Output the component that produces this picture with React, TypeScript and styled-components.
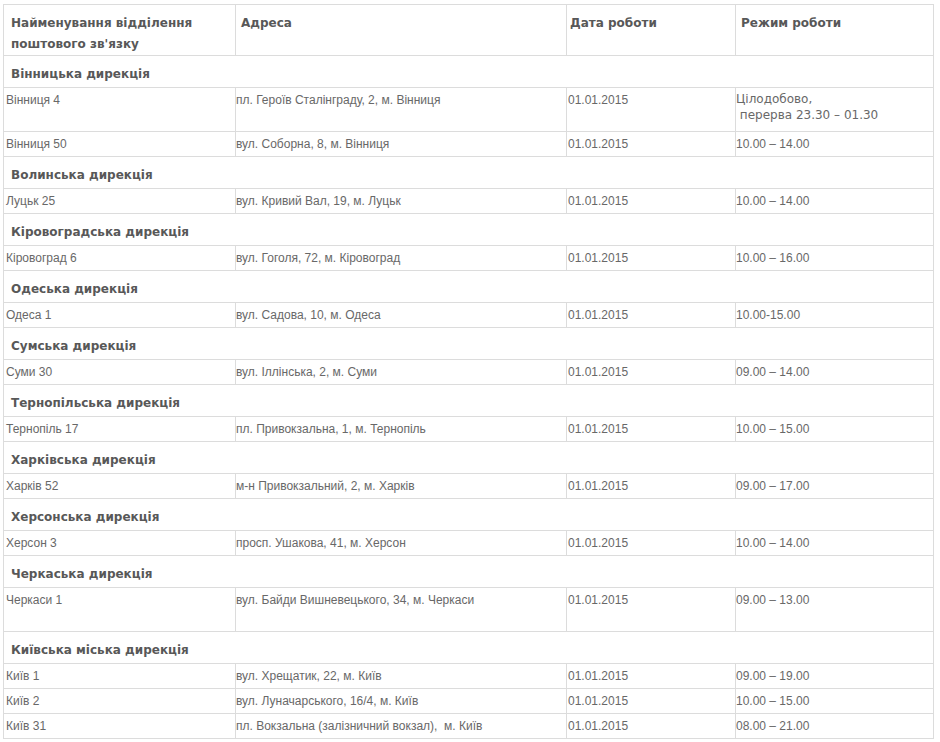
import React from "react";
import styled, { createGlobalStyle } from "styled-components";

const GlobalStyle = createGlobalStyle`
  html, body {
    margin: 0;
    padding: 0;
    background: #ffffff;
  }
  body {
    font-family: "Liberation Sans", Arial, sans-serif;
  }
`;

const Page = styled.div`
  padding: 4px 0 0 3px;
`;

const Table = styled.div`
  display: grid;
  grid-template-columns: 232px 331px 169px 198px;
  width: max-content;
  border-left: 1px solid #dcdcdc;
  border-top: 1px solid #dcdcdc;
`;

const pads = ["7px", "5px", "3px", "5px"];
const dataPads = ["2px", "0px", "1px", "0px"];

const HeadCell = styled.div<{ $col: number }>`
  box-sizing: border-box;
  height: 51px;
  padding: 8px 4px 0 ${(p) => pads[p.$col]};
  border-right: 1px solid #dcdcdc;
  border-bottom: 1px solid #dcdcdc;
  font-family: "DejaVu Sans", Verdana, sans-serif;
  font-weight: bold;
  font-size: 12px;
  line-height: 21px;
  color: #585858;
`;

const SectionCell = styled.div`
  grid-column: 1 / -1;
  box-sizing: border-box;
  height: 32px;
  padding: 8px 6px 0 7px;
  border-right: 1px solid #dcdcdc;
  border-bottom: 1px solid #dcdcdc;
  font-family: "DejaVu Sans", Verdana, sans-serif;
  font-weight: bold;
  font-size: 12px;
  line-height: 21px;
  color: #585858;
`;

const Cell = styled.div<{ $col: number; $tall?: boolean }>`
  box-sizing: border-box;
  height: ${(p) => (p.$tall ? 44 : 25)}px;
  padding: 5px 2px 0 ${(p) => dataPads[p.$col]};
  border-right: 1px solid #dcdcdc;
  border-bottom: 1px solid #dcdcdc;
  font-family: "Liberation Sans", Arial, sans-serif;
  font-size: 12px;
  line-height: 14px;
  color: #686868;
  white-space: nowrap;
  overflow: hidden;
`;

const ScheduleCell = styled.div`
  box-sizing: border-box;
  height: 44px;
  padding: 3px 2px 0 0;
  border-right: 1px solid #dcdcdc;
  border-bottom: 1px solid #dcdcdc;
  font-family: "DejaVu Sans", Verdana, sans-serif;
  font-size: 12px;
  line-height: 16px;
  color: #686868;
`;

const Line = styled.div`
  white-space: nowrap;
`;

type Row = {
  name: string;
  address: string;
  date: string;
  hours?: string;
  tall?: boolean;
  special?: boolean;
};

type Section = { title: string; rows: Row[] };

const D = "01.01.2015";

const sections: Section[] = [
  {
    title: "Вінницька дирекція",
    rows: [
      { name: "Вінниця 4", address: "пл. Героїв Сталінграду, 2, м. Вінниця", date: D, special: true },
      { name: "Вінниця 50", address: "вул. Соборна, 8, м. Вінниця", date: D, hours: "10.00 – 14.00" },
    ],
  },
  {
    title: "Волинська дирекція",
    rows: [{ name: "Луцьк 25", address: "вул. Кривий Вал, 19, м. Луцьк", date: D, hours: "10.00 – 14.00" }],
  },
  {
    title: "Кіровоградська дирекція",
    rows: [{ name: "Кіровоград 6", address: "вул. Гоголя, 72, м. Кіровоград", date: D, hours: "10.00 – 16.00" }],
  },
  {
    title: "Одеська дирекція",
    rows: [{ name: "Одеса 1", address: "вул. Садова, 10, м. Одеса", date: D, hours: "10.00-15.00" }],
  },
  {
    title: "Сумська дирекція",
    rows: [{ name: "Суми 30", address: "вул. Іллінська, 2, м. Суми", date: D, hours: "09.00 – 14.00" }],
  },
  {
    title: "Тернопільська дирекція",
    rows: [{ name: "Тернопіль 17", address: "пл. Привокзальна, 1, м. Тернопіль", date: D, hours: "10.00 – 15.00" }],
  },
  {
    title: "Харківська дирекція",
    rows: [{ name: "Харків 52", address: "м-н Привокзальний, 2, м. Харків", date: D, hours: "09.00 – 17.00" }],
  },
  {
    title: "Херсонська дирекція",
    rows: [{ name: "Херсон 3", address: "просп. Ушакова, 41, м. Херсон", date: D, hours: "10.00 – 14.00" }],
  },
  {
    title: "Черкаська дирекція",
    rows: [
      { name: "Черкаси 1", address: "вул. Байди Вишневецького, 34, м. Черкаси", date: D, hours: "09.00 – 13.00", tall: true },
    ],
  },
  {
    title: "Київська міська дирекція",
    rows: [
      { name: "Київ 1", address: "вул. Хрещатик, 22, м. Київ", date: D, hours: "09.00 – 19.00" },
      { name: "Київ 2", address: "вул. Луначарського, 16/4, м. Київ", date: D, hours: "10.00 – 15.00" },
      { name: "Київ 31", address: "пл. Вокзальна (залізничний вокзал),\u00a0 м. Київ", date: D, hours: "08.00 – 21.00" },
    ],
  },
];

const headers = ["Найменування відділення поштового зв'язку", "Адреса", "Дата роботи", "Режим роботи"];

export default function App() {
  return (
    <>
      <GlobalStyle />
      <Page>
        <Table>
          <HeadCell $col={0}>
            Найменування відділення
            <br />
            поштового зв'язку
          </HeadCell>
          {headers.slice(1).map((h, i) => (
            <HeadCell key={h} $col={i + 1}>
              {h}
            </HeadCell>
          ))}
          {sections.map((s) => (
            <React.Fragment key={s.title}>
              <SectionCell>{s.title}</SectionCell>
              {s.rows.map((r) => {
                const tall = r.tall || r.special;
                return (
                  <React.Fragment key={r.name}>
                    <Cell $col={0} $tall={tall}>{r.name}</Cell>
                    <Cell $col={1} $tall={tall}>{r.address}</Cell>
                    <Cell $col={2} $tall={tall}>{r.date}</Cell>
                    {r.special ? (
                      <ScheduleCell>
                        <Line>Цілодобово,</Line>
                        <Line>{"\u00a0перерва 23.30 – 01.30"}</Line>
                      </ScheduleCell>
                    ) : (
                      <Cell $col={3} $tall={tall}>{r.hours}</Cell>
                    )}
                  </React.Fragment>
                );
              })}
            </React.Fragment>
          ))}
        </Table>
      </Page>
    </>
  );
}
